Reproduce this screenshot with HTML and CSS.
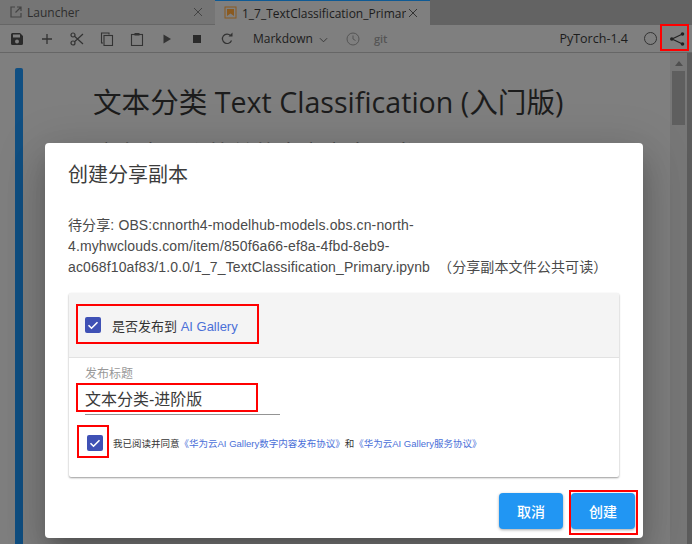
FILE: index.html
```html
<!DOCTYPE html>
<html lang="en">
<head>
<meta charset="UTF-8">
<title>Notebook</title>
<link rel="stylesheet" href="styles.css">
</head>
<body>

<div id="app">
  <div class="tabbar">
    <div class="tab">
      <svg class="tab-icon" viewBox="0 0 14 14"><path d="M6 2H2v10h10V8M8 2h4v4M12 2L6.500 7.500" fill="none" stroke="#444" stroke-width="1.200"/></svg>
      <span class="tab-name">Launcher</span>
      <svg class="tab-close" viewBox="0 0 10 10"><path d="M1 1l8 8M9 1l-8 8" stroke="#444" stroke-width="1" fill="none"/></svg>
    </div>
    <div class="tab active">
      <svg class="tab-icon" viewBox="0 0 14 14"><rect x="1" y="1" width="11" height="11" fill="none" stroke="#8a5a20" stroke-width="1"/><path d="M3 3h7v7L6.500 7.500 3 10z" fill="#8a5a20"/></svg>
      <span class="tab-name">1_7_TextClassification_Primar</span>
      <svg class="tab-close" viewBox="0 0 10 10"><path d="M1 1l8 8M9 1l-8 8" stroke="#333" stroke-width="1" fill="none"/></svg>
    </div>
  </div>

  <div class="toolbar">
    <svg class="tool" viewBox="0 0 14 14"><path d="M1 2.500A1.500 1.500 0 0 1 2.500 1H10l3 3v7.500a1.500 1.500 0 0 1-1.500 1.500h-9A1.500 1.500 0 0 1 1 11.500z" fill="#2a2a2a"/><rect x="3" y="2.500" width="7" height="3" fill="#7f7f7f"/><circle cx="7" cy="9.500" r="2" fill="#7f7f7f"/></svg>
    <svg class="tool" viewBox="0 0 14 14"><path d="M7 2v10M2 7h10" stroke="#333" stroke-width="1.300" fill="none"/></svg>
    <svg class="tool" viewBox="0 0 14 14"><circle cx="3" cy="3" r="2" fill="none" stroke="#333" stroke-width="1.200"/><circle cx="3" cy="11" r="2" fill="none" stroke="#333" stroke-width="1.200"/><path d="M4.500 4.200L13 12M4.500 9.800L13 2" stroke="#333" stroke-width="1.200" fill="none"/></svg>
    <svg class="tool" viewBox="0 0 14 14"><path d="M3 11H1.500V1H9v1.500" fill="none" stroke="#333" stroke-width="1.100"/><rect x="4" y="3.500" width="8.500" height="10" fill="none" stroke="#333" stroke-width="1.100"/></svg>
    <svg class="tool" viewBox="0 0 14 14"><rect x="1.500" y="2.500" width="11" height="11" fill="none" stroke="#333" stroke-width="1.100"/><rect x="4.500" y="1" width="5" height="2.500" fill="#333"/></svg>
    <svg class="tool" viewBox="0 0 14 14"><path d="M3.500 2.500L11 7l-7.500 4.500z" fill="#333"/></svg>
    <svg class="tool" viewBox="0 0 14 14"><rect x="3" y="3" width="8" height="8" fill="#2a2a2a"/></svg>
    <svg class="tool" viewBox="0 0 14 14"><path d="M11.500 8.500A4.700 4.700 0 1 1 10.500 3.500" fill="none" stroke="#333" stroke-width="1.200"/><path d="M8.500 4.500h4v-4z" fill="#333"/></svg>
    <span class="cell-type">Markdown
      <svg class="chevron" viewBox="0 0 10 6"><path d="M1 1l4 4 4-4" fill="none" stroke="#333" stroke-width="1"/></svg>
    </span>
    <svg class="clock" viewBox="0 0 14 14"><circle cx="7" cy="7" r="6" fill="none" stroke="#555" stroke-width="1"/><path d="M7 3.500V7l2.500 1.500" fill="none" stroke="#555" stroke-width="1"/></svg>
    <span class="git">git</span>
    <span class="kernel">PyTorch-1.4</span>
    <span class="kernel-dot"></span>
    <svg class="share" viewBox="0 0 16 16"><path d="M13.500 3L3 8l10.500 5" fill="none" stroke="#222" stroke-width="1.100"/><circle cx="13.500" cy="3" r="1.800" fill="#222"/><circle cx="2.800" cy="8" r="1.800" fill="#222"/><circle cx="13.500" cy="13" r="1.800" fill="#222"/></svg>
  </div>

  <div class="notebook">
    <div class="cell-bar"></div>
    <div class="cell-body">
      <h1>文本分类 Text Classification (入门版)</h1>
      <p>这次来一个简单的中文文本分类</p>
    </div>
    <div class="scrollbar">
      <div class="scroll-arrow"></div>
      <div class="scroll-thumb"></div>
    </div>
  </div>

  <div class="dialog">
    <h2>创建分享副本</h2>
    <p class="share-path">待分享: OBS:cnnorth4-modelhub-models.obs.cn-north-4.myhwclouds.com/item/850f6a66-ef8a-4fbd-8eb9-ac068f10af83/1.0.0/1_7_TextClassification_Primary.ipynb &nbsp;（分享副本文件公共可读）</p>

    <div class="card">
      <div class="card-head">
        <span class="check"><svg viewBox="0 0 16 16"><path d="M3.500 8.200l3 3 6-6" fill="none" stroke="#fff" stroke-width="1.600"/></svg></span>
        <span class="publish-label">是否发布到 <a>AI Gallery</a></span>
      </div>
      <div class="card-body">
        <label class="field-label">发布标题</label>
        <div class="field-value">文本分类-进阶版</div>
        <div class="agree">
          <span class="check"><svg viewBox="0 0 16 16"><path d="M3.500 8.200l3 3 6-6" fill="none" stroke="#fff" stroke-width="1.600"/></svg></span>
          <span class="agree-text">我已阅读并同意<a>《华为云AI Gallery数字内容发布协议》</a>和<a>《华为云AI Gallery服务协议》</a></span>
        </div>
      </div>
    </div>

    <div class="actions">
      <button>取消</button>
      <button>创建</button>
    </div>
  </div>

  <!-- annotation boxes from the original screenshot -->
  <div class="mark mark-share"></div>
  <div class="mark mark-publish"></div>
  <div class="mark mark-title"></div>
  <div class="mark mark-agree"></div>
  <div class="mark mark-create"></div>
</div>

</body>
</html>
```

FILE: styles.css
```css
html, body {
  margin: 0;
  height: 100%;
  overflow: hidden;
}
body {
  font-family: "Liberation Sans", "Noto Sans CJK SC", sans-serif;
  background: #7f7f7f;
}
#app {
  position: relative;
  width: 692px;
  height: 544px;
  overflow: hidden;
  display: flex;
  flex-direction: column;
}

/* tabs */
.tabbar {
  display: flex;
  height: 25px;
  background: #636363;
  flex: none;
}
.tab {
  width: 215px;
  display: flex;
  align-items: center;
  padding: 0 12px 0 9px;
  box-sizing: border-box;
  background: #757575;
  border-bottom: 1px solid #666;
  font-family: "Open Sans", "Noto Sans", sans-serif;
  font-size: 12px;
  color: #2e2e2e;
}
.tab.active {
  background: #7f7f7f;
  border-top: 1px solid #0f5a94;
  border-bottom: 0;
  color: #1c1c1c;
}
.tab-icon {
  width: 14px;
  height: 14px;
  margin-right: 4px;
  flex: none;
}
.tab-name {
  flex: 1;
  white-space: nowrap;
  overflow: hidden;
}
.tab-close {
  width: 10px;
  height: 10px;
  margin-left: 2px;
  flex: none;
}

/* toolbar */
.toolbar {
  height: 28px;
  flex: none;
  box-sizing: border-box;
  display: flex;
  align-items: center;
  padding-left: 10px;
  border-bottom: 1px solid #666;
  font-family: "Open Sans", "Noto Sans", sans-serif;
  font-size: 12px;
  color: #1c1c1c;
}
.tool {
  width: 14px;
  height: 14px;
  margin-right: 16px;
  flex: none;
}
.cell-type {
  margin-left: 3px;
  display: flex;
  align-items: center;
  gap: 6px;
}
.chevron {
  width: 9px;
  height: 6px;
  margin-top: 2px;
}
.clock {
  width: 14px;
  height: 14px;
  margin-left: 18px;
}
.git {
  margin-left: 14px;
  font-size: 11px;
  font-weight: 600;
  color: #555;
}
.kernel {
  margin-left: auto;
  font-size: 12.500px;
}
.kernel-dot {
  width: 11px;
  height: 11px;
  border: 1.500px solid #333;
  border-radius: 50%;
  margin-left: 16px;
}
.share {
  width: 16px;
  height: 16px;
  margin: 0 7px 0 12px;
}

/* notebook behind the dialog */
.notebook {
  flex: 1;
  display: flex;
  padding-top: 15px;
  min-height: 0;
  color: #1c1c1c;
  font-family: "Open Sans", "Noto Sans", "Noto Sans CJK SC", sans-serif;
}
.cell-bar {
  width: 8px;
  margin-left: 15px;
  background: #104f82;
  border-radius: 2px 2px 0 0;
  flex: none;
}
.cell-body {
  flex: 1;
  padding-left: 70px;
}
.cell-body h1 {
  margin: 16px 0 0;
  font-size: 28.600px;
  font-weight: 400;
  line-height: 36px;
  white-space: nowrap;
}
.cell-body p {
  margin: 21px 0 0;
  font-size: 23px;
  line-height: 24px;
  white-space: nowrap;
}
.scrollbar {
  width: 22px;
  flex: none;
  background: #777;
  margin-top: -15px;
  border-right: 5px solid #5c5c5c;
  box-sizing: border-box;
}
.scroll-arrow {
  width: 0;
  height: 0;
  margin: 8px 0 0 5px;
  border: 4px solid transparent;
  border-top: 0;
  border-bottom: 5px solid #4f4f4f;
}
.scroll-thumb {
  width: 13px;
  height: 54px;
  margin: 5px 0 0 2px;
  background: #5f5f5f;
}

/* dialog and its shadow */
.dialog {
  position: absolute;
  left: 45px;
  top: 143px;
  width: 598px;
  height: 395px;
  box-sizing: border-box;
  padding: 0 24px;
  background: #fff;
  border-radius: 4px;
  box-shadow: 0 11px 15px -7px rgba(0, 0, 0, 0.2), 0 24px 38px 3px rgba(0, 0, 0, 0.14), 0 9px 46px 8px rgba(0, 0, 0, 0.12);
  color: #444;
}
.dialog h2 {
  margin: 20px 0 0 -1px;
  font-size: 20px;
  font-weight: 400;
  line-height: 24px;
  color: #3c3c3c;
}
.share-path {
  margin: 28px 0 0 -1px;
  font-size: 14px;
  line-height: 21px;
  letter-spacing: 0.120px;
  color: #4a4a4a;
  overflow-wrap: anywhere;
}
.card {
  margin-top: 15px;
  width: 550px;
  height: 184px;
  border-radius: 2px;
  box-shadow: 0 1px 2px rgba(0, 0, 0, 0.4);
}
.card-head {
  height: 65px;
  box-sizing: border-box;
  background: #f4f4f4;
  border-bottom: 1px solid #e2e2e2;
  display: flex;
  align-items: center;
  padding-left: 16px;
  gap: 11px;
}
.check {
  width: 16px;
  height: 16px;
  border-radius: 2px;
  background: #3f51b5;
  display: block;
  flex: none;
}
.check svg {
  display: block;
  width: 16px;
  height: 16px;
}
.publish-label {
  font-size: 13px;
  color: #333;
}
.dialog a {
  color: #4a6fd8;
}
.card-body {
  padding: 9px 0 0 16px;
}
.field-label {
  display: block;
  font-size: 12px;
  line-height: 14px;
  color: #999;
}
.field-value {
  width: 195px;
  height: 34px;
  box-sizing: border-box;
  border-bottom: 1px solid #949494;
  font-size: 16px;
  line-height: 26px;
  padding-top: 6px;
  color: #3a3a3a;
}
.agree {
  display: flex;
  align-items: center;
  gap: 10px;
  margin: 20px 0 0 2px;
}
.agree-text {
  font-size: 9.500px;
  color: #333;
  white-space: nowrap;
}
.actions {
  display: flex;
  justify-content: flex-end;
  gap: 8px;
  margin: 16px -16px 0 0;
}
.actions button {
  width: 64px;
  height: 36px;
  border: 0;
  border-radius: 4px;
  background: #2196f3;
  color: #fff;
  font: 500 14px "Liberation Sans", "Noto Sans CJK SC", sans-serif;
  box-shadow: 0 1px 3px rgba(0, 0, 0, 0.35);
}

/* red annotation rectangles */
.mark {
  position: absolute;
  box-sizing: border-box;
  border: 2px solid #f00;
}
.mark-share { left: 660px; top: 24px; width: 29px; height: 27px; }
.mark-publish { left: 76px; top: 304px; width: 183px; height: 40px; }
.mark-title { left: 76px; top: 383px; width: 182px; height: 29px; }
.mark-agree { left: 77px; top: 425px; width: 32px; height: 33px; }
.mark-create { left: 569px; top: 490px; width: 69px; height: 45px; }
```
